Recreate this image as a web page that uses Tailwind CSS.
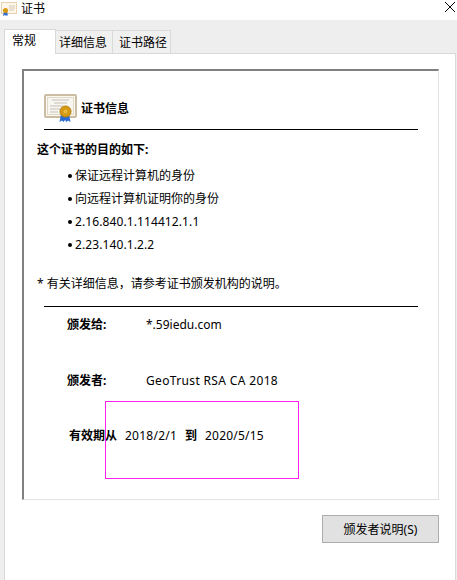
<!DOCTYPE html>
<html lang="zh-CN">
<head>
    <meta charset="UTF-8">
    <title>证书</title>
    <script src="https://cdn.jsdelivr.net/npm/@tailwindcss/browser@4"></script>
</head>
<body class="bg-white">
    <div class="relative w-[457px] h-[580px] overflow-hidden bg-white text-[12px] text-black font-['Noto_Sans','Noto_Sans_CJK_SC',sans-serif]">
        <!-- Title bar -->
        <div class="flex items-center h-[20px] pb-[3px]">
            <svg class="ml-[1px] w-[16px] h-[14px]" viewBox="0 0 16 14">
                <rect x="0.5" y="0.5" width="15" height="11" fill="#fdf6ea" stroke="#e8d2ae"/>
                <path d="M8 4h6M8 6h6M8 8h5" stroke="#d8c8b0"/>
                <path d="M3 9l-1 5 2-1 1 1 1-1 1 1-1-5z" fill="#2f6fd0"/>
                <circle cx="4.5" cy="8.5" r="2.5" fill="#d8990f"/>
            </svg>
            <span class="ml-[4px] leading-[17px]">证书</span>
            <svg class="ml-auto mr-[2px] mb-[3px] w-[10px] h-[10px]" viewBox="0 0 10 10">
                <path d="M0 0L10 10M10 0L0 10" stroke="#000" stroke-width="1"/>
            </svg>
        </div>

        <!-- Tabs -->
        <div class="flex items-end h-[33px] pl-[4px] bg-[#eeeeee]">
            <div class="w-[52px] h-[25px] mb-[-1px] z-10 bg-white border border-b-0 border-[#d9d9d9] pl-[7px] leading-[22px]">常规</div>
            <div class="w-[58px] h-[23px] ml-[-1px] border border-b-0 border-l-0 border-[#d9d9d9] bg-[#f0f0f0] pl-[4px] leading-[24px]">详细信息</div>
            <div class="w-[58px] h-[23px] border border-b-0 border-l-0 border-[#d9d9d9] bg-[#f0f0f0] pl-[6px] leading-[24px]">证书路径</div>
        </div>

        <!-- Tab pane -->
        <div class="h-[527px] bg-[#eeeeee] pl-[4px] pr-[1px]">
            <div class="h-full bg-white border border-b-0 border-[#d9d9d9] pl-[17px] pr-[15px] pt-[15px]">
                <div class="relative w-[417px] h-[431px] border-2 border-t-[#808080] border-l-[#808080] border-r-[#e3e3e3] border-b-[#e3e3e3] border-r border-b">
                    <div class="flex items-center h-[59px] ml-[20px] mr-[20px] pt-[17px] border-b border-black">
                        <svg class="w-[33px] h-[29px]" viewBox="0 0 33 29">
                            <rect x="1" y="1" width="31" height="22" rx="1" fill="#fbf8f0" stroke="#cbbda4" stroke-width="2"/>
                            <rect x="3.5" y="3.5" width="26" height="17" fill="#f8f6f0" stroke="#e2d9c8"/>
                            <path d="M8 6h17M10 9h13M6 12h13M6 15h10M6 18h8" stroke="#b8b4a8" stroke-width="0.8"/>
                            <path d="M17 20l-1.500 8 2.500-1.500 1.500 1.500 1.500-2 1.500 2 1.500-1.500 2.500 1.500-1.500-8z" fill="#2a6cd6"/>
                            <circle cx="21.500" cy="17.500" r="5.500" fill="#d79a10" stroke="#b47c08"/>
                            <circle cx="21.500" cy="17.500" r="2.500" fill="#e9b93c" stroke="#c48c10" stroke-width="0.6"/>
                        </svg>
                        <span class="ml-[4px] font-bold">证书信息</span>
                    </div>

                    <div class="ml-[13px] mt-[11px] leading-[18px] font-bold">这个证书的目的如下:</div>
                    <ul class="ml-[44px] mt-[8px] flex flex-col gap-[5px] leading-[18px]">
                        <li class="flex items-center"><span class="w-[4px] h-[4px] mr-[3px] rounded-full bg-black"></span>保证远程计算机的身份</li>
                        <li class="flex items-center"><span class="w-[4px] h-[4px] mr-[3px] rounded-full bg-black"></span>向远程计算机证明你的身份</li>
                        <li class="flex items-center"><span class="w-[4px] h-[4px] mr-[3px] rounded-full bg-black"></span><span class="tracking-[0.1px]">2.16.840.1.114412.1.1</span></li>
                        <li class="flex items-center"><span class="w-[4px] h-[4px] mr-[3px] rounded-full bg-black"></span><span class="tracking-[0.1px]">2.23.140.1.2.2</span></li>
                    </ul>
                    <div class="ml-[13px] mt-[21px] leading-[18px]">* 有关详细信息，请参考证书颁发机构的说明。</div>
                    <div class="ml-[20px] mr-[20px] mt-[13px] border-b border-black"></div>

                    <div class="flex ml-[43px] mt-[9px] leading-[18px]">
                        <span class="w-[79px] font-bold">颁发给:</span>
                        <span>*.59iedu.com</span>
                    </div>
                    <div class="flex ml-[43px] mt-[38px] leading-[18px]">
                        <span class="w-[79px] font-bold">颁发者:</span>
                        <span class="tracking-[0.35px]">GeoTrust RSA CA 2018</span>
                    </div>
                    <div class="flex ml-[45px] mt-[37px] leading-[18px]">
                        <span class="w-[56px] font-bold">有效期从</span>
                        <span class="w-[60px] tracking-[0.25px]">2018/2/1</span>
                        <span class="w-[20px] font-bold">到</span>
                        <span class="tracking-[0.2px]">2020/5/15</span>
                    </div>
                    <!-- magenta selection box -->
                    <div class="absolute left-[81px] top-[330px] w-[194px] h-[78px] border border-[#ff20f0]"></div>
                </div>
                <div class="flex justify-end w-[417px] mt-[15px]">
                    <button class="w-[117px] h-[28px] pt-[1px] bg-[#e1e1e1] border border-[#adadad] text-[12px]">颁发者说明(S)</button>
                </div>
            </div>
        </div>
    </div>
</body>
</html>
